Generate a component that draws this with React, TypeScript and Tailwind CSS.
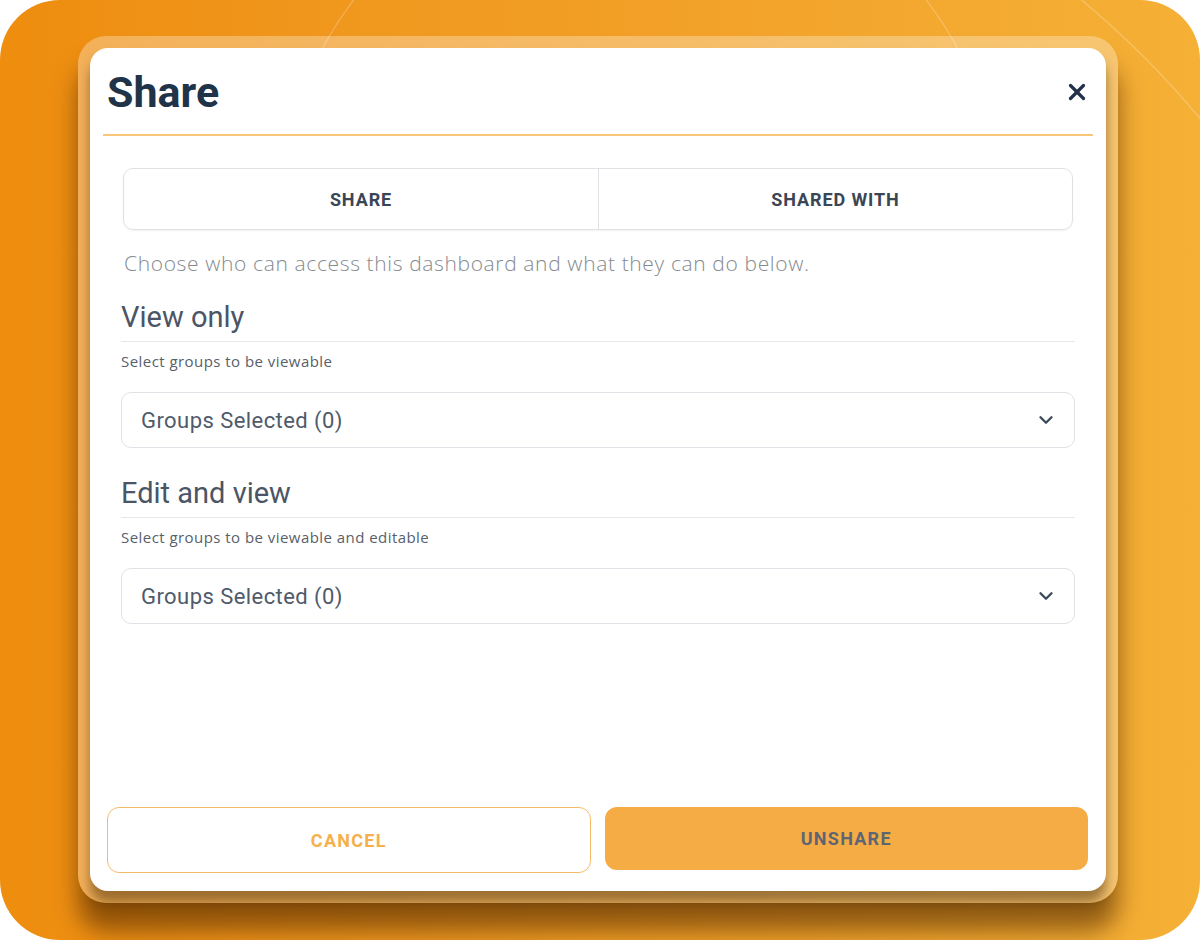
import { ChevronDown, X } from "lucide-react";

const font = { fontFamily: "Roboto, 'Liberation Sans', sans-serif" };
const wide = { fontFamily: "'Open Sans', Roboto, sans-serif" };

function Section({ title, hint }: { title: string; hint: string }) {
  return (
    <div>
      <div className="text-[29px] leading-[36px] text-[#4b5565]">{title}</div>
      <div className="mt-[6px] h-px bg-[#e6e8eb]" />
      <div style={wide} className="mt-[9px] text-[15px] leading-[20px] tracking-[0.03em] text-[#59606b]">
        {hint}
      </div>
      <button
        type="button"
        className="mt-[21px] w-full h-[56px] rounded-[10px] border border-[#dfe2e6] bg-white flex items-center justify-between pl-[19px] pr-[17px]"
      >
        <span className="text-[22px] tracking-[0.02em] text-[#4f5a6a]">Groups Selected (0)</span>
        <ChevronDown size={22} strokeWidth={2.6} className="text-[#3d4a5a]" />
      </button>
    </div>
  );
}

export default function App() {
  return (
    <div
      style={font}
      className="relative w-[1200px] h-[940px] rounded-[60px] overflow-hidden bg-gradient-to-r from-[#ee8d0e] to-[#f5b036]"
    >
      <svg className="absolute inset-0 pointer-events-none" width="1200" height="940" aria-hidden>
        <circle cx="640" cy="220" r="361" fill="none" stroke="white" strokeOpacity="0.22" strokeWidth="1.5" />
        <circle cx="500" cy="700" r="910" fill="none" stroke="white" strokeOpacity="0.22" strokeWidth="1.5" />
      </svg>

      <div className="relative pt-[36px] pl-[78px]">
        <div className="w-[1040px] h-[867px] rounded-[28px] bg-white/30 p-[12px] shadow-[0_28px_24px_rgba(80,40,0,0.6)]">
          <div className="h-full rounded-[18px] bg-white flex flex-col shadow-[0_12px_12px_rgba(70,40,0,0.5)]">
            <div className="flex items-center justify-between pl-[17px] pr-[16px] pt-[20px]">
              <h1 className="text-[43px] leading-[48px] font-bold text-[#1f3349]">Share</h1>
              <X size={26} strokeWidth={3} className="text-[#233248]" />
            </div>
            <div className="mt-[18px] mx-[13px] h-[2px] bg-[#f9c67c]" />

            <div className="px-[31px]">
              <div className="mt-[32px] mx-[2px] h-[62px] rounded-[10px] border border-[#dfe1e4] grid grid-cols-2 shadow-[0_1px_2px_rgba(0,0,0,0.05)]">
                <div className="flex items-center justify-center text-[18px] font-bold tracking-[0.05em] text-[#3a4656]">
                  SHARE
                </div>
                <div className="flex items-center justify-center border-l border-[#dfe1e4] text-[18px] font-bold tracking-[0.05em] text-[#3a4656]">
                  SHARED WITH
                </div>
              </div>

              <p style={wide} className="mt-[19px] ml-[3px] text-[21px] leading-[28px] font-light tracking-[0.03em] text-[#858a90]">
                Choose who can access this dashboard and what they can do below.
              </p>

              <div className="mt-[22px]">
                <Section title="View only" hint="Select groups to be viewable" />
              </div>
              <div className="mt-[27px]">
                <Section title="Edit and view" hint="Select groups to be viewable and editable" />
              </div>
            </div>

            <div className="mt-auto pl-[17px] pr-[18px] pb-[18px] grid grid-cols-2 gap-[14px]">
              <button
                type="button"
                className="h-[66px] rounded-[12px] border-[1.5px] border-[#f6bb66] bg-white text-[18px] font-bold tracking-[0.07em] text-[#f5b04c]"
              >
                CANCEL
              </button>
              <button
                type="button"
                className="h-[63px] rounded-[12px] bg-[#f5ac45] text-[18px] font-bold tracking-[0.07em] text-[#5d6573]"
              >
                UNSHARE
              </button>
            </div>
          </div>
        </div>
      </div>
    </div>
  );
}
